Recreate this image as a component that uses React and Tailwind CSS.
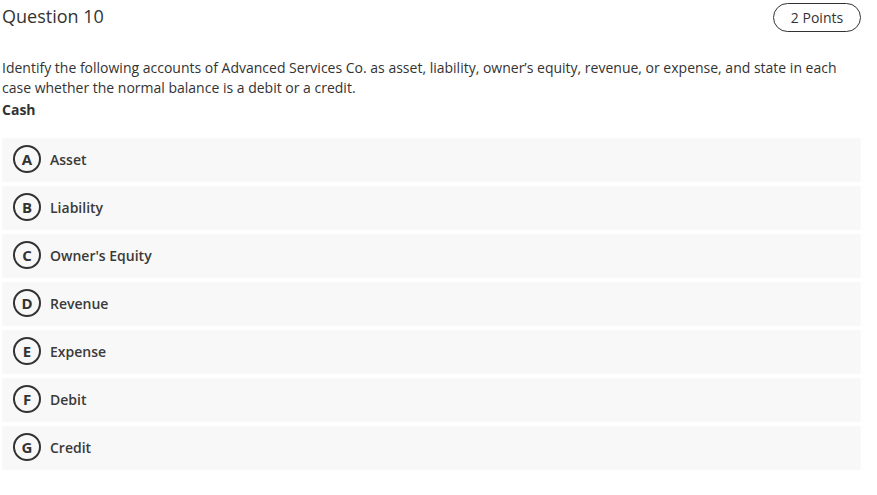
import React from "react";

const options = [
  ["A", "Asset"],
  ["B", "Liability"],
  ["C", "Owner's Equity"],
  ["D", "Revenue"],
  ["E", "Expense"],
  ["F", "Debit"],
  ["G", "Credit"],
];

export default function App() {
  return (
    <div className="w-[877px] h-[495px] bg-white text-[#333] font-['Open_Sans',sans-serif] pl-[2px] pr-[16px]">
      <div className="flex items-center justify-between h-[34px]">
        <div className="text-[18px] leading-[24px] text-[#333] -mt-[2px]">Question 10</div>
        <div className="h-[29px] w-[88px] rounded-full border border-[#333] flex items-center justify-center text-[14px] text-[#333]">
          2 Points
        </div>
      </div>
      <div className="mt-[24px] pr-[4px] text-[14px] leading-[20px] text-[#333]">
        Identify the following accounts of Advanced Services Co. as asset, liability, owner’s equity, revenue, or expense, and state in each case whether the normal balance is a debit or a credit.
      </div>
      <div className="mt-[2px] text-[14px] leading-[20px] font-bold text-[#333]">Cash</div>
      <div className="mt-[18px] flex flex-col gap-[4px]">
        {options.map(([l, t]) => (
          <div key={l} className="h-[44px] bg-[#f8f8f8] rounded-[2px] flex items-center pl-[11px] pb-[2px]">
            <div className="w-[28px] h-[28px] rounded-full border-2 border-[#333] flex items-center justify-center text-[15px] leading-none font-bold text-[#333]">
              {l}
            </div>
            <div className="ml-[9px] text-[14px] font-semibold text-[#3a3a3a]">{t}</div>
          </div>
        ))}
      </div>
    </div>
  );
}
